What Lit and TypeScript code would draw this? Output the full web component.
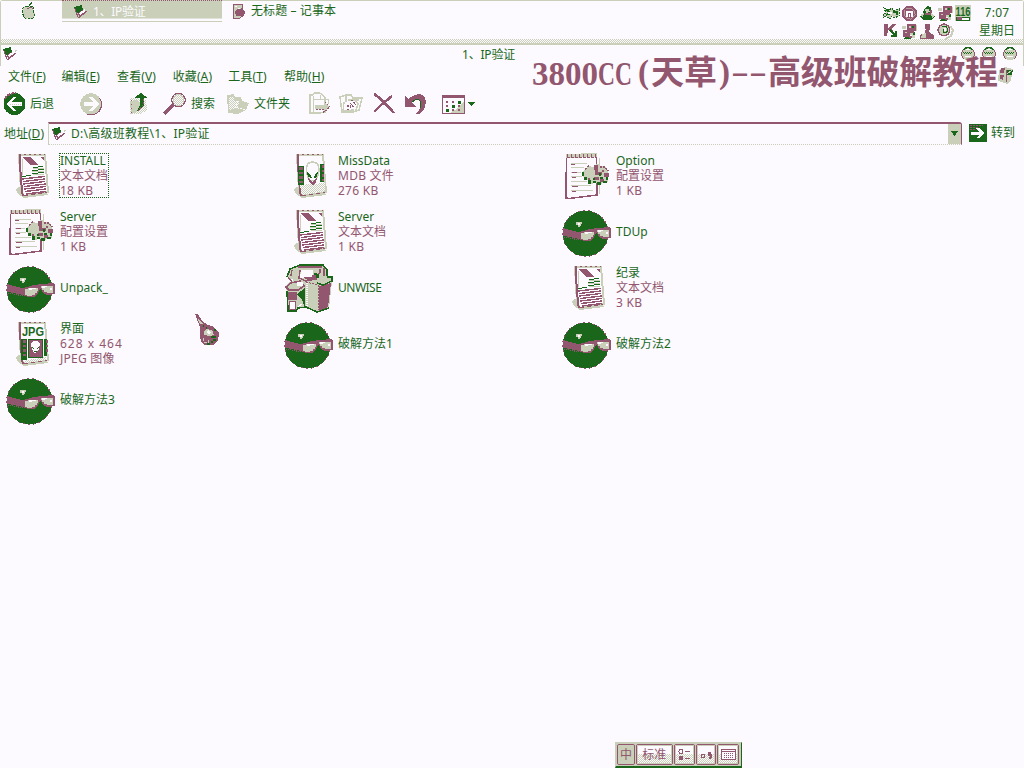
import { LitElement, html, css, svg } from "lit";
import { customElement, property } from "lit/decorators.js";

const G = "#1a671c";
const M = "#92566f";
const S = "#c9cfb8";
const W = "#fcfafe";

const ico = (w: number, h: number, body: unknown, cls = "") =>
  html`<svg class=${cls} width=${w} height=${h} viewBox="0 0 ${w} ${h}" shape-rendering="crispEdges">
    <defs><pattern id="d" width="2" height="2" patternUnits="userSpaceOnUse"><rect width="2" height="2" fill=${W}/><rect width="1" height="1" fill=${S}/><rect x="1" y="1" width="1" height="1" fill=${S}/></pattern></defs>
    ${body}</svg>`;

const book = (cls = "") => ico(15, 14, svg`
  <path d="M0 2 8 0 9 5 5 9 2 7Z" fill=${G}/><path d="M4 8 9 5 13 6 5 12Z" fill=${M}/>
  <path d="M5 8 11 4 11 7 6 10Z" fill=${W}/><path d="M0.500 3 4 12 6 12 13 6" fill="none" stroke=${M}/><path d="M12 4.500 14 3" stroke=${S}/>`, cls);

const ball = svg`
  <circle cx="25.500" cy="25.500" r="23" fill=${G}/>
  <circle cx="25.500" cy="25.500" r="22.900" fill="none" stroke=${M} stroke-dasharray="2 3"/>
  <path d="M3 20 10 22 18 24 24 23 29 21 38 20 49 19 51 21 51 30 48 30 48 31 43 31 39 29 38 26 36 25 34 29 30 33 24 33 19 31 10 29 3 28Z" fill=${M}/>
  <path d="M4 29 10 30 19 32" fill="none" stroke=${M} stroke-dasharray="1 1"/>
  <path d="M21 25H24V24H34V27H33V29H31V31H28V32H23V31H21Z" fill=${S}/>
  <path d="M37 22H49V29H43V28H40V26H38V24H37Z" fill=${S}/>
  <path d="M25 24H32V25H28V26H25Z M38 22H43V23H41V24H38Z M46 24H48V26H46Z" fill=${W}/>
  <path d="M16 14H22V16H21V18H20V19H18V17H16Z" fill=${S}/><path d="M18 15H20V17H18Z" fill=${W}/>`;

const sheet = svg`
  <path d="M12 37 17 34 24 42 43 40 44 43 20 46 13 41Z" fill=${S}/>
  <path d="M15 3 41 3 44 40 20 44 17 39Z" fill=${W} stroke=${S} stroke-width="2"/>
  <path d="M15.500 3 17 28 18.500 42 20 44" fill="none" stroke=${M} stroke-width="2"/>
  <path d="M15 2.500H41" stroke=${M} stroke-dasharray="2 3"/><path d="M20 44 43 40.500" stroke=${M} stroke-dasharray="4 3"/>`;

const text = svg`${sheet}
  <path d="M18 5 26 5 35 13 26 13Z" fill=${M}/><path d="M36 5 40 5 40 8Z" fill=${M}/><path d="M18.500 23V7" stroke=${S}/>
  <path d="M29 15.500 39 14.500M28 18.500 40 17.500M28 21.500 40 20.500M18 24.500 27 23.500" stroke=${G} stroke-width="1"/>
  <path d="M29 17 40 16M28 20 40 19M29 23 40 22" stroke=${S}/>
  <path d="M18 27 41 24.500 M19 29.500 41 27 M19 32 41 29.500 M20 34.500 42 32 M20 37 42 34.500M21 39.500 42 37M22 42 42 39.500" stroke=${M} stroke-width="1.400"/>`;

const ini = svg`
  <path d="M6 4 36 3 37 43 9 47 6 46Z" fill=${W}/>
  <path d="M36.500 5 37 43 9 46.500 6 46 6.500 5" fill="none" stroke=${M} stroke-width="1.600"/><path d="M39 6V13M39 33V42" stroke=${S}/>
  <path d="M6 4 37 3" stroke=${S} stroke-width="4"/><path d="M7 4 37 3" stroke=${M} stroke-width="3" stroke-dasharray="1 3"/><path d="M7 6 37 5" stroke=${M} stroke-dasharray="3 1"/>
  <path d="M11 11H27M11 15.500H24M11 20.500H21M11 24.500H22M11 29.500H27M11 33.500H31M11 38.500H33" stroke=${S}/>
  <path d="M11 12.500H15M12 20.500H17M12 25.500H16M12 34.500H18M12 39.500H16" stroke=${M}/>
  <path d="M22 22 24 18 28 14 34 15 36 12 39 12 40 14 45 14 48 19 49 23 47 25 48 30 43 30 40 33 36 31 30 32 28 28 24 26Z" fill=${S}/>
  <path d="M34 13H38V20H42V23H35Z M44 21H49V25H44Z M34 25H39V28H34Z M40 27H44V30H40Z" fill=${M}/>
  <path d="M24 25H27V28H24Z M28 28H31V32H28Z M33 29H36V31H33Z M37 30H41V33H37Z M43 29H47V31H43Z M46 25H48V28H46Z M33 26H35V28H33Z M40 25H43V27H40Z M22 20H24V24H22Z M39 21H41V24H39Z" fill=${G}/>
  <path d="M25 17 29 14M40 15 45 15 48 19" fill="none" stroke=${M} stroke-width="1.500" stroke-dasharray="2 1"/>
  <path d="M28 26H30V28H28Z M42 18H44V20H42Z" fill=${M}/>`;

const film = (x: number, y: number, w: number, h: number) => svg`
  <rect x=${x} y=${y} width=${w} height=${h} fill=${G}/>
  ${Array.from({ length: Math.floor(h / 4.5) }, (_, i) => svg`<rect x=${x + 1.5} y=${y + 1 + i * 4.5} width=${Math.max(w - 2.5, 2)} height="2.500" fill=${M}/>`)}`;

const mdb = svg`${sheet}
  <path d="M18 33 43 31 43 39 20 43Z" fill="url(#d)"/>
  ${film(15.5, 14, 6, 19)}${film(38, 12, 4, 18)}
  <path d="M24.500 18Q24 10 30.500 10 37 10 37 18 36 27 31 31 25 27 24.500 18Z" fill=${W} stroke=${S} stroke-width="1.600"/>
  <path d="M25 20 28 22 30 26 26 25Z M36 20 33 22 32 26 35 25Z" fill=${G}/><path d="M26 26 30 30 35 26 34 30 31 33 27 30Z" fill=${M}/>
  <path d="M29 28H32" stroke=${S}/>`;

const jpg = svg`${sheet}
  <path d="M18 41 42 37 43 40 20 43Z" fill="url(#d)"/>
  <text x="18" y="15.500" font-family="Liberation Sans" font-weight="700" font-size="12" textLength="22" lengthAdjust="spacingAndGlyphs" fill=${G}>JPG</text>
  ${film(17, 19, 6, 21)}${film(40, 19, 3, 17)}
  <rect x="24.500" y="19.500" width="14" height="18" fill=${M} stroke=${G}/>
  <path d="M27 24 29 21 34 21 36 24 35 29 32 33 30 33 28 29Z" fill=${W}/><path d="M28 27 30 29 M35 27 33 29M30 31.500H33" stroke=${G}/>`;

const basket = svg`
  <path d="M5 13 8 5 13 3 18 1 41 1 45 6 45 12 50 14 50 18 47 44 35 48 24 43 16 44 14 47 6 47 5 27 3 23 6 19 12 16Z" fill=${S}/>
  <path d="M5 13 8 5 13 3 18 1 41 1 45 6 45 12M47 44 35 48 24 43 16 44 14 47 6 47 5 27" fill="none" stroke=${G} stroke-width="1.600"/>
  <path d="M16 3H40M18 6 17 14 24 17 34 15 38 8 38 5M42 4 42 12M6 14 10 17M10 6 9 12" fill="none" stroke=${M} stroke-width="1.500"/>
  <path d="M19 6H31V12L25 14H18Z" fill=${W}/><path d="M32 9 37 10 37 14H33Z" fill=${G}/><path d="M21 13H30V11H34V16H26Z" fill=${M}/>
  <path d="M37 22 49 19 46 43 37 47Z" fill=${M}/><path d="M24 18 36 21 36 46" fill="none" stroke=${M} stroke-dasharray="2 1"/>
  <path d="M25 19V43" stroke=${W} stroke-dasharray="1 1" stroke-width="2"/>
  <path d="M15 30 23 24 23 44 20 36Z" fill=${G}/><path d="M35 19 41 21 50 17 50 13 45 13" fill="none" stroke=${G} stroke-width="1.500"/>
  <path d="M4 23 9 19 18 17 22 22 16 26 7 26Z" fill=${S} stroke=${M} stroke-width="1.500"/><path d="M15 18H21V22H15Z" fill=${W}/>
  <rect x="6" y="28" width="9" height="8" fill=${M}/><rect x="7.500" y="37.500" width="6" height="8" fill=${W} stroke=${M}/>
  <path d="M16 43 20 40" fill="none" stroke=${W}/>`;

const art: Record<string, unknown> = { ball, text, ini, mdb, jpg, basket };

const files = [
  ["text", "INSTALL", "文本文档", "18 KB"], ["mdb", "MissData", "MDB 文件", "276 KB"], ["ini", "Option", "配置设置", "1 KB"],
  ["ini", "Server", "配置设置", "1 KB"], ["text", "Server", "文本文档", "1 KB"], ["ball", "TDUp"],
  ["ball", "Unpack_"], ["basket", "UNWISE"], ["text", "纪录", "文本文档", "3 KB"],
  ["jpg", "界面", "628 x 464", "JPEG 图像"], ["ball", "破解方法1"], ["ball", "破解方法2"],
  ["ball", "破解方法3"],
];

const fonts = css`
  :host { font: 12px/15px "Noto Sans", "Noto Sans CJK SC", sans-serif; color: #1a671c; white-space: nowrap; }
  svg { display: block; flex: none; overflow: visible; }
`;

@customElement("file-tile")
class FileTile extends LitElement {
  @property({ type: Array }) file: string[] = [];
  @property({ type: Boolean }) focused = false;
  static styles = [fonts, css`
    :host { display: flex; align-items: center; height: 48px; }
    .label { margin: -2px 0 0 3px; padding: 0 1px; }
    .focus { outline: 1px dotted #1a671c; outline-offset: -1px; width: 48px; }
    .focus .caps { letter-spacing: 0; }
    .caps { letter-spacing: -.5px; }
    .meta { color: #92566f; letter-spacing: .25px; }
    .cjk { letter-spacing: 0; }
    .dim { letter-spacing: 1px; }
  `];
  render() {
    const [kind, name, ...meta] = this.file;
    const metaClass = (m: string) => (/^[\u4e00-\u9fff]+$/.test(m) ? "cjk" : /\d x/.test(m) ? "dim" : "");
    return html`${ico(52, 48, art[kind])}
      <div class="label ${this.focused ? "focus" : ""}">
        <div class=${/^[A-Z]{3,}$/.test(name) ? "caps" : ""}>${name}</div>${meta.map((m) => html`<div class="meta ${metaClass(m)}">${m}</div>`)}
      </div>`;
  }
}

const monitors = svg`<path d="M6 1H15V8H6Z M2 7H9V14H2Z" fill=${M}/><path d="M8 3H10V5H8Z M4 9H6V10H4Z M9 10H12V12H9Z" fill=${S}/><path d="M11 3H13V5H11ZM4 14H10V16H2Z M12 9H14V13H12Z" fill=${G}/><path d="M1 3H5V6H1Z M11 12H14V15H11Z M15 2H16V8H15Z" fill=${S}/><path d="M9 8H13V10H9Z M8 13H11V15H8Z" fill=${M}/>`;
const tray = [
  svg`<path d="M1 3 6 5 9 3 10 6 16 4V11L11 13 9 11 7 14 3 11 0 13V9L3 8Z" fill=${S} stroke=${G} stroke-dasharray="2 1"/><path d="M3 5 8 8 3 10M10 7H14V10" fill="none" stroke=${G} stroke-width="2"/><path d="M5 7H9V9H5Z" fill=${W}/>`,
  svg`<circle cx="8.500" cy="8.500" r="7.800" fill=${M}/><circle cx="8.500" cy="8.500" r="5.500" fill="none" stroke=${S} stroke-width=".6"/><path d="M5 6H12V12H10V8H7V12H5Z" fill=${W}/><path d="M8 9H9V12H8Z" fill=${W}/>`,
  svg`<path d="M5 4 8 1 12 2 13 8 16 12 12 15H4L1 12 4 8Z" fill=${G}/><path d="M6 4H10L11 7 7 8Z M1 10 5 8 4 13Z M12 8 16 11 13 13Z" fill=${S}/><path d="M6 9H12M12 5V8" stroke=${M} stroke-width="2"/>`,
  monitors,
  svg`<rect width="16" height="16" fill=${S}/><text x=".5" y="11" font-family="Liberation Sans" font-size="12.500" font-weight="700" textLength="15" lengthAdjust="spacingAndGlyphs" fill=${G}>116</text><rect x="1.500" y="12.500" width="13" height="3" fill=${W} stroke=${G}/><rect x="2" y="12" width="5" height="3" fill=${M}/>`,
  svg`<path d="M1 1H5V5L10 1H13L8 6 10 8H7L5 7 4 13H1Z" fill=${M}/><path d="M7 7 12 12M12.500 8V12.500H8" fill="none" stroke=${G} stroke-width="2"/>`,
  monitors,
  svg`<circle cx="8.500" cy="3.500" r="2.800" fill=${M}/><path d="M7 5H11L10 9 15 12V16H1V12L6 10Z" fill=${M}/><path d="M3 11 7 10 7 15H2Z" fill=${S}/>`,
  svg`<path d="M13 3 16 7 14 13 8 16" fill="none" stroke=${S} stroke-width="2"/><circle cx="7" cy="7" r="5.800" fill=${S} stroke=${M} stroke-width="1.600"/><path d="M5 3.500H9L11 7 9 10 6 9 6 6" fill="none" stroke=${G}/><path d="M7 5H9V8H7Z" fill=${W}/>`,
];

const tools: [string, unknown, string][] = [
  ["back", ico(24, 24, svg`<circle cx="12.500" cy="12" r="11" fill=${G}/><path d="M3 7A10 10 0 0 1 14 1.500" fill="none" stroke=${M} stroke-width="2" stroke-dasharray="3 1"/><path d="M4 12 11 5H14L10 10H20V14H10L14 19H11Z" fill=${W}/><path d="M8 12.500H19" stroke=${S} stroke-dasharray="1 1"/>`), "后退"],
  ["fwd", ico(24, 24, svg`<circle cx="12" cy="12" r="10.700" fill=${S}/><path d="M20.500 6A10.500 10.500 0 0 1 8 22" fill="none" stroke=${M} stroke-width="1.200"/><path d="M20 12 13 5H10L14 10H5V14H14L10 19H13Z" fill=${W}/>`), ""],
  ["up", ico(20, 24, svg`<path d="M1 6H8L10 8H17L18 18 12 22H1Z" fill="url(#d)"/><path d="M1 9 7 8 12 12 12 18 2 22Z" fill=${S}/><path d="M2 8V22" stroke=${M} stroke-dasharray="1 3"/><path d="M5 6 12 1 19 6H15L15 13 10 19H8L11 13V6Z" fill=${G}/><path d="M14 7V13L9 19" fill="none" stroke=${M} stroke-dasharray="2 1"/>`), ""],
  ["find", ico(24, 24, svg`<path d="M1 22 10 13" stroke=${M} stroke-width="3"/><circle cx="15.500" cy="8" r="6.800" fill=${W} stroke=${M} stroke-width="1.200"/><circle cx="15.500" cy="8" r="5.500" fill="url(#d)" stroke=${S}/>`), "搜索"],
  ["dirs", ico(24, 24, svg`<path d="M1 3 8 2 9 5H15L16 9 23 11 20 18 12 22 2 21Z" fill=${S}/><path d="M3 5H8V9H14L12 15 3 18Z" fill="url(#d)"/><path d="M12 9 9 15 19 18" fill="none" stroke=${W} stroke-dasharray="2 1"/>`), "文件夹"],
  ["move", ico(24, 24, svg`<path d="M2 3H5L6 1H12L17 5V20L12 21H2Z" fill=${W} stroke=${S} stroke-width="1.200"/><path d="M5 7H12M12 3V7H20V12M5 4V21" fill="none" stroke=${S}/><path d="M7 13H16V10L22 15 16 20V17H7Z" fill=${S}/><path d="M8 17.500H16V20L22 15 17 10" fill="none" stroke=${M} stroke-dasharray="2 1" stroke-width="1.200"/>`), ""],
  ["copy", ico(24, 24, svg`<path d="M1 5 7 3H12L14 6H23L20 18 14 20H3Z" fill=${W} stroke=${S} stroke-width="1.500"/><path d="M9 8H20M5 10 4 20M15 7 19 12 17 18M7 3 7 10M3 19 15 18" fill="none" stroke=${S} stroke-width="1.500"/><path d="M8 18 14 14 11 11M12 8 17 12 13 16M8 14H12" fill="none" stroke=${M} stroke-width="1.300" stroke-dasharray="2 1"/>`), ""],
  ["del", ico(24, 24, svg`<path d="M2 2Q9 6 22 21M20 4 9 13 2 20" fill="none" stroke=${M} stroke-width="2.600"/>`), ""],
  ["undo", ico(24, 24, svg`<path d="M2 3 5 7Q18-2 22 6 25 14 17 22L13 22Q20 15 17 8 14 5 9 10L13 15 2 15Z" fill=${M}/><path d="M9 10Q17 4 18 12L17 16" fill="none" stroke=${G}/>`), ""],
  ["view", ico(36, 24, svg`<rect x="2.500" y="3.500" width="22" height="18" fill=${W} stroke=${M}/><path d="M2 4.500H25" stroke=${M} stroke-width="3"/><path d="M15 18 24 10V21H10Z" fill=${S}/>${[0, 1, 2].map((r) => [0, 1, 2].map((c) => svg`<rect x=${6 + c * 6} y=${9 + r * 4} width=${c === 2 - r ? 3 : 2} height=${c === 2 - r ? 3 : 2} fill=${(r + c) % 3 === 2 ? G : M}/>`))}<path d="M28 10H35L31.500 14Z" fill=${G}/>`), ""],
];

@customElement("app-root")
class AppRoot extends LitElement {
  static styles = [fonts, css`
    :host { display: block; position: relative; width: 1024px; height: 768px; overflow: hidden; background: #fcfafe; }
    .dock { box-sizing: border-box; height: 45px; display: flex; border-top: 1px solid #c9cfb8; border-left: 1px solid #c9cfb8; border-bottom: 2px solid #c9cfb8; border-right: 1px solid #c9cfb8; border-radius: 3px 3px 0 0;
      background: repeating-conic-gradient(#c9cfb8 0 25%, #fcfafe 0 50%) 0 38px / 2px 2px; background-clip: padding-box; }
    .dockin { display: flex; width: 100%; height: 38px; background: #fcfafe; align-items: flex-start; }
    .apple { margin: 0 0 0 20px; }
    .task { display: flex; box-sizing: border-box; height: 22px; width: 160px; margin: -1px 0 0 25px; padding: 4px 0 0 12px; color: #fcfafe; background: #c9cfb8; border-top: 1px dotted #92566f; border-bottom: 1px solid #c9cfb8; box-shadow: inset 0 -2px #fcfafe, inset 0 -3px #dfe2d6; }
    .task span { margin: -1px 0 0 4px; letter-spacing: -.3px; }
    .task2 { display: flex; margin: 2px 0 0 10px; width: 651px; }
    .task2 span { margin-left: 5px; letter-spacing: .1px; }
    .tray { display: grid; grid-template-columns: repeat(5, 18px); grid-auto-rows: 18px; margin-top: 4px; width: 92px; }
    .clock { width: 44px; text-align: center; line-height: 18px; margin: 3px 0 0 0; }
    .time { letter-spacing: .3px; }
    .title { box-sizing: border-box; height: 21px; border-left: 1px solid #c9cfb8; border-right: 1px solid #c9cfb8; display: flex; }
    .title .tb { margin: 2px 0 0 2px; }
    .name { width: 52px; margin: 2px 0 0 444px; letter-spacing: -.2px; }
    .orbs { display: flex; gap: 5px; margin: 1px 0 0 446px; }
    .menu { display: flex; height: 20px; align-items: center; padding-left: 8px; box-sizing: border-box; }
    .menu span { width: 53.500px; letter-spacing: .1px; }
    .menu span:nth-child(n + 2) { width: 55.600px; }
    u { text-underline-offset: 1px; }
    .tools { display: flex; height: 35px; align-items: center; }
    .tool { display: flex; align-items: center; }
    .tool span { margin: 0 0 0 4px; }
    .back { margin-left: 2px; width: 77px; } .fwd { width: 50px; } .up { width: 34px; } .find { width: 63px; }
    .dirs { width: 82px; } .move { width: 31px; } .copy { width: 33px; } .del { width: 31px; } .undo { width: 37px; }
    .address { display: flex; height: 24px; align-items: center; padding-left: 4px; }
    .field { box-sizing: border-box; display: flex; align-items: center; width: 914px; height: 23px; margin: 0 7px 0 4px; padding-left: 3px; border-top: 2px solid #92566f; border-left: 1px solid #c9cfb8; border-bottom: 1px dotted #c9cfb8; border-right: 1px solid #92566f; border-radius: 0 3px 0 0; }
    .field span { margin-left: 4px; flex: 1; letter-spacing: .25px; }
    .drop { width: 13px; height: 20px; background: #c9cfb8; display: flex; align-items: center; justify-content: center; }
    .go { margin: -1px 0 0 4px; }
    .lbl { width: 40px; }
    .grid { display: grid; grid-template-columns: repeat(3, 278px); grid-auto-rows: 48px; row-gap: 8px; padding: 7px 0 0 4px; }
    .banner { position: absolute; left: 528px; top: 50px; }
    .flag { position: absolute; left: 997px; top: 66px; }
    .cursor { position: absolute; left: 194px; top: 313px; }
    .ime { position: absolute; left: 615px; top: 742px; box-sizing: border-box; width: 127px; height: 26px; display: flex; gap: 1px; padding: 1px 2px 2px 1px; background: #c9cfb8; border: 1px solid #c9cfb8; border-right: 1px solid #1a671c; border-bottom: 2px solid #1a671c; color: #92566f; }
    .key { box-sizing: border-box; display: flex; align-items: center; justify-content: center; height: 21px; border: 1px solid #92566f; border-radius: 2px;
      background: linear-gradient(#fcfafe 0 9px, transparent 9px), repeating-conic-gradient(#c9cfb8 0 25%, #fcfafe 0 50%) 0 0 / 2px 2px; outline: 1px solid #c9cfb8; outline-offset: -2px; }
    .k1 { width: 18px; background: #c9cfb8; } .k2 { width: 37px; } .k3 { width: 22px; } .k4 { width: 20px; } .k5 { width: 22px; }
  `];

  render() {
    const menus = [["文件", "F"], ["编辑", "E"], ["查看", "V"], ["收藏", "A"], ["工具", "T"], ["帮助", "H"]];
    const orb = ico(16, 17, svg`<circle cx="8" cy="8" r="6.500" fill=${S}/><path d="M4 13A6.500 6.500 0 0 1 4 3" fill="none" stroke=${M}/><path d="M12 3A6.500 6.500 0 0 1 12 13" fill="none" stroke=${M}/><path d="M3 4Q8-1 13 4" fill="none" stroke=${G} stroke-width="1.500"/><path d="M3 6.500H13M4 7.500H12" stroke=${G} stroke-dasharray="1 1"/><path d="M6 3H10V4H6Z M5 10H11V11H5Z" fill=${W}/>`);
    return html`
      <div class="dock"><div class="dockin">
        ${ico(16, 20, svg`<path d="M7 6 4 5 2 7 1 11 3 16 5 18 7 17 10 18 12 17 14 13 12 11 12 8 13 6 11 5Z" fill=${S} stroke=${G} stroke-dasharray="3 1"/><path d="M8 5 9 2 11 1 11 3Z" fill=${G}/><path d="M6 8 10 6 12 8" fill="none" stroke=${M}/>`, "apple")}
        <div class="task">${book()}<span>1、IP验证</span></div>
        <div class="task2">${ico(14, 16, svg`<path d="M1.500 1.500H10L12 12 8 15H1.500Z" fill=${S} stroke=${M}/><path d="M4 7 6 5 8 6 10 5 13 9 12 13 4 13 3 9Z" fill=${M}/><path d="M3 3H5M6 5H8" stroke=${W}/>`)}<span>无标题 – 记事本</span></div>
        <div class="tray">${tray.map((t) => ico(17, 17, t))}</div>
        <div class="clock"><div class="time">7:07</div><div>星期日</div></div>
      </div></div>
      <div class="title">${book("tb")}<div class="name">1、IP验证</div><div class="orbs">${orb}${orb}${orb}</div></div>
      <div class="menu">${menus.map(([n, k]) => html`<span>${n}(<u>${k}</u>)</span>`)}</div>
      <div class="tools">${tools.map(([c, i, t]) => html`<div class="tool ${c}">${i}${t ? html`<span>${t}</span>` : ""}</div>`)}</div>
      <div class="address"><div class="lbl">地址(<u>D</u>)</div>
        <div class="field">${book()}<span>D:\\高级班教程\\1、IP验证</span><div class="drop">${ico(7, 5, svg`<path d="M0 0H7L3.500 5Z" fill=${G}/>`)}</div></div>
        ${ico(18, 18, svg`<rect width="18" height="18" fill=${G}/><path d="M1 1.500H14M1 3.500H10M1 5.500H7" stroke=${M} stroke-dasharray="2 1"/><path d="M2 8H10L7 4H10L16 9 10 14H7L10 11H2Z" fill=${W}/>`)}
        <div class="go">转到</div></div>
      <div class="grid">${files.map((f, i) => html`<file-tile .file=${f} ?focused=${i === 0}></file-tile>`)}</div>

      <svg class="banner" width="480" height="46" fill=${M} font-size="33" font-weight="700" font-family="Liberation Serif, Noto Sans CJK SC">
        <text x="4" y="35" textLength="66">3800</text>
        <text x="70" y="35" textLength="34" lengthAdjust="spacingAndGlyphs">CC</text>
        <text x="110" y="33">(</text>
        <text x="123" y="34" font-family="Noto Sans CJK SC" textLength="66">天草</text>
        <text x="191" y="33">)</text>
        <text x="203" y="33" textLength="36" lengthAdjust="spacingAndGlyphs" font-weight="400">--</text>
        <text x="240" y="34" font-family="Noto Sans CJK SC" textLength="230">高级班破解教程</text>
      </svg>
      ${ico(18, 19, svg`<path d="M2 4 8 1 16 3 14 14 10 18 1 15Z" fill=${S}/><path d="M4 2 8 2 7 7 3 7Z M3 9 7 9 6 14 3 13Z" fill=${M}/><path d="M10 4 16 4 15 9 10 9Z" fill=${G}/><path d="M9 4V16" stroke=${M}/><path d="M10 8 15 4" stroke=${S}/>`, "flag")}
      ${ico(26, 34, svg`<path d="M1 1 4 1 8 8 14 12 20 14 25 20 24 28 19 32 11 32 7 29 6 22 6 14Z" fill=${M}/><path d="M3 4 9 11 6 11Z" fill=${S}/><path d="M9 13H10M12 15H13M20 17H22M17 24H22M19 27H22M17 29H19M13 31H16" stroke=${G} stroke-width="2"/><path d="M10 18 12 16 18 17 20 22 15 23 10 22Z" fill=${S}/><path d="M12 19 14 17 17 19 15 21Z" fill=${W}/><path d="M9 25 10 29 14 30 15 26" fill="none" stroke=${S} stroke-dasharray="3 1"/>`, "cursor")}
      <div class="ime">
        <div class="key k1">中</div><div class="key k2">标准</div>
        <div class="key k3">${ico(14, 14, svg`<circle cx="4" cy="3.500" r="2" fill="none" stroke=${M}/><circle cx="4" cy="10" r="2.500" fill=${M}/><path d="M8 3.500H13M8 10.500H13" stroke=${M}/>`)}</div>
        <div class="key k4">${ico(14, 14, svg`<circle cx="4" cy="8" r="2" fill="none" stroke=${M}/><circle cx="10.500" cy="6" r="2" fill=${M}/><path d="M12 6V9L10 11" fill="none" stroke=${M} stroke-width="1.500"/>`)}</div>
        <div class="key k5">${ico(15, 13, svg`<rect x=".5" y="1.500" width="14" height="10" fill=${W} stroke=${M}/><path d="M1 3.500H14" stroke=${M}/><path d="M3 5.500H12M3 7.500H12M3 9.500H12" stroke=${M} stroke-dasharray="1 1"/>`)}</div>
      </div>`;
  }
}
